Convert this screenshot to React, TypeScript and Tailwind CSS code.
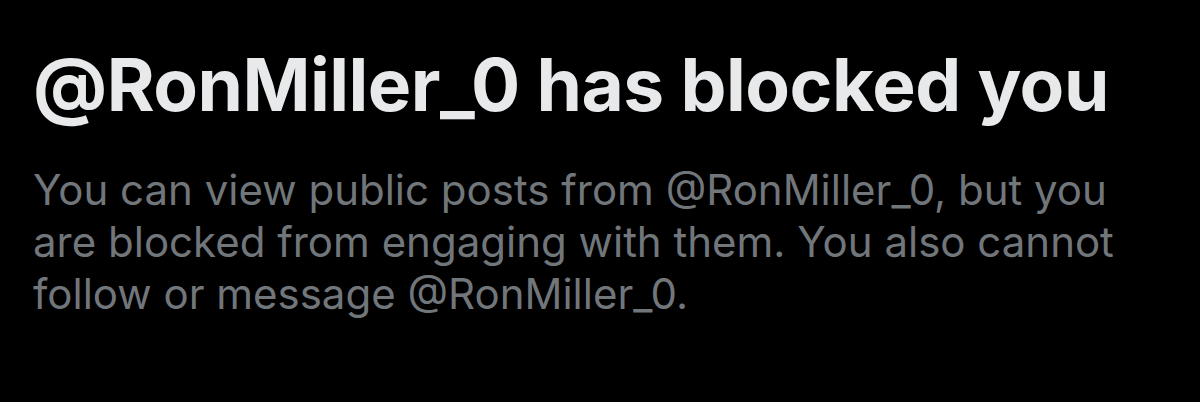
export default function App() {
  return (
    <div className="w-[1200px] h-[402px] bg-black overflow-hidden font-['Inter',sans-serif]">
      <div className="pl-[33px] pt-[41px]">
        <h1 className="text-[73px] leading-[88px] font-bold text-[#e7e9ea] tracking-[-0.5px]">
          @RonMiller_0 has blocked you
        </h1>
        <p className="mt-[35px] w-[1120px] text-[42px] leading-[52px] text-[#71767b]">
          You can view public posts from @RonMiller_0, but you are blocked from engaging with them. You also cannot follow or message @RonMiller_0.
        </p>
      </div>
    </div>
  )
}
